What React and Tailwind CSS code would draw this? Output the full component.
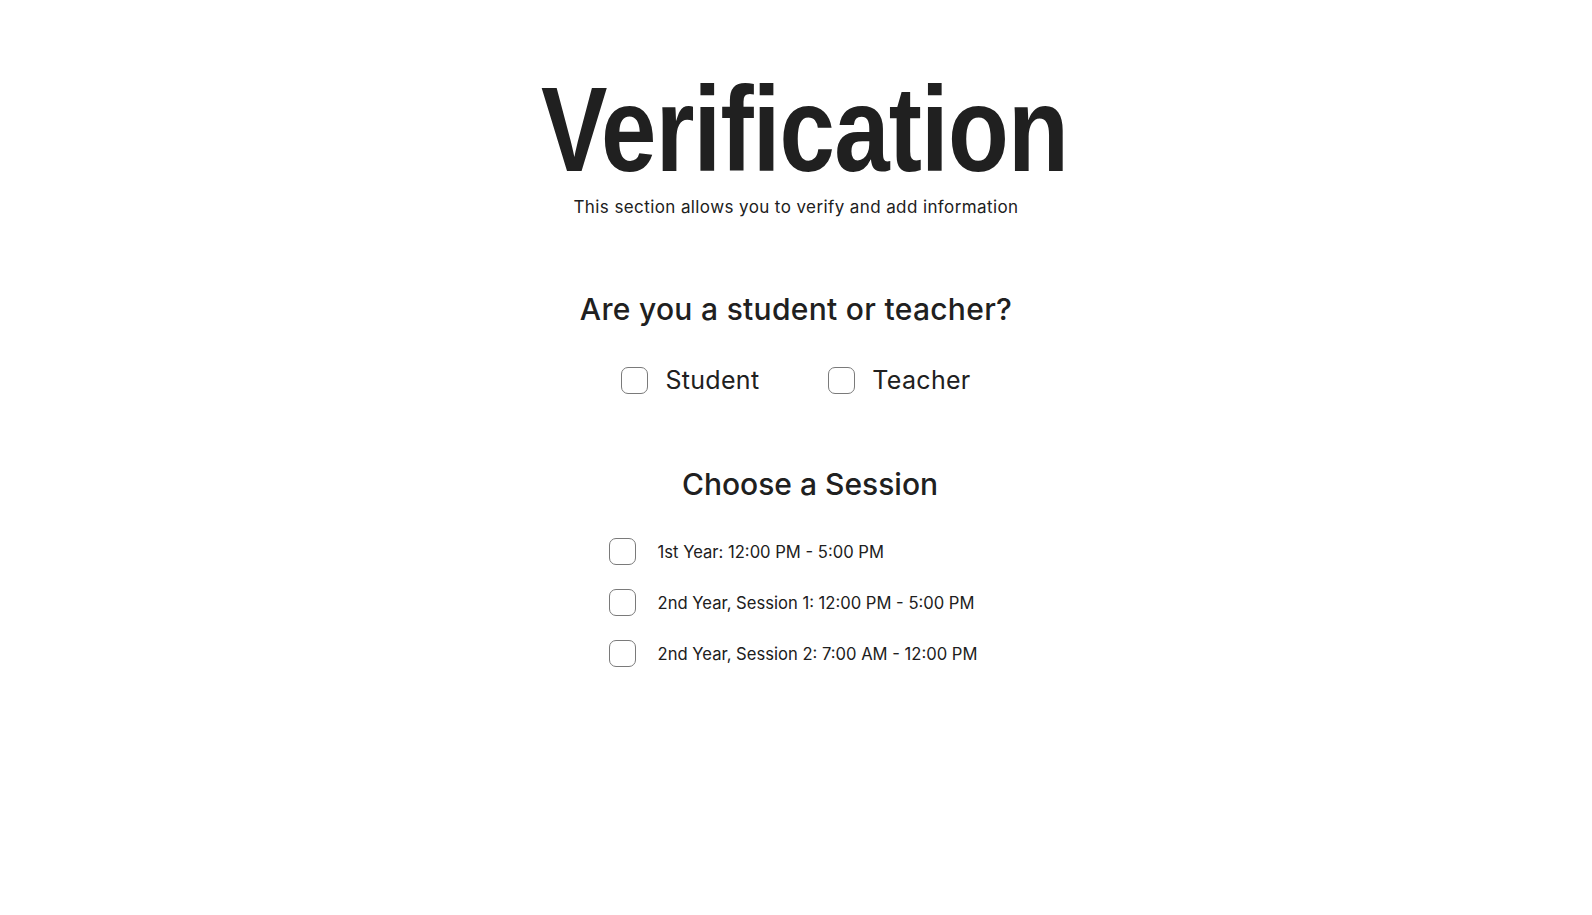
import { useState } from 'react';

const sessions = [
  '1st Year: 12:00 PM - 5:00 PM',
  '2nd Year, Session 1: 12:00 PM - 5:00 PM',
  '2nd Year, Session 2: 7:00 AM - 12:00 PM'
];

function Box({ checked, onClick }) {
  return (
    <button
      type="button"
      onClick={onClick}
      className="flex h-[27px] w-[27px] shrink-0 items-center justify-center rounded-[7px] border border-[#7a7a7a] bg-white"
    >
      {checked ? <span className="h-[13px] w-[13px] rounded-[3px] bg-[#202020]" /> : null}
    </button>
  );
}

export default function App() {
  const [role, setRole] = useState('');
  const [session, setSession] = useState('');

  return (
    <div className="min-h-[915px] bg-white text-[#202020] font-['Inter','Noto_Sans',sans-serif]">
      <div className="flex flex-col items-center pt-[69px]">
        <h1 className="origin-center translate-x-[8px] scale-x-[0.83] font-['Liberation_Sans',Arial,sans-serif] text-[120px] font-bold leading-none tracking-[-1px]">
          Verification
        </h1>
        <p className="mt-[6px] text-[17px] leading-6 tracking-[0.4px]">This section allows you to verify and add information</p>

        <h2 className="mt-[72px] text-[30px] font-medium leading-9 tracking-[0.3px]">Are you a student or teacher?</h2>
        <div className="mt-[37px] flex items-center gap-[69px]">
          {['Student', 'Teacher'].map((item) => (
            <label key={item} className="flex cursor-pointer items-center gap-[17px]" onClick={() => setRole(item)}>
              <Box checked={role === item} />
              <span className="text-[25px] leading-8 tracking-[0.3px]">{item}</span>
            </label>
          ))}
        </div>

        <h2 className="ml-[28px] mt-[68px] text-[30px] font-medium leading-10">Choose a Session</h2>
        <div className="mr-[6px] mt-[34px] flex flex-col gap-[24px]">
          {sessions.map((item) => (
            <label key={item} className="flex cursor-pointer items-center gap-[22px]" onClick={() => setSession(item)}>
              <Box checked={session === item} />
              <span className="text-[16.6px] leading-6">{item}</span>
            </label>
          ))}
        </div>
      </div>
    </div>
  );
}
